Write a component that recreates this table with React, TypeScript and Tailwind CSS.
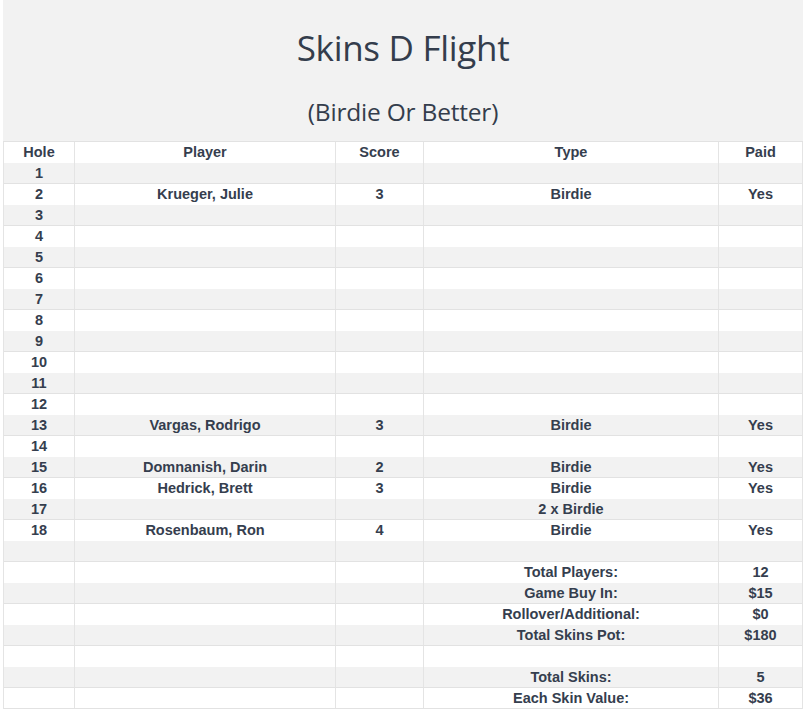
type Row = { hole?: string; player?: string; score?: string; type?: string; paid?: string };

const holes: Row[] = [
  { hole: '1' },
  { hole: '2', player: 'Krueger, Julie', score: '3', type: 'Birdie', paid: 'Yes' },
  { hole: '3' },
  { hole: '4' },
  { hole: '5' },
  { hole: '6' },
  { hole: '7' },
  { hole: '8' },
  { hole: '9' },
  { hole: '10' },
  { hole: '11' },
  { hole: '12' },
  { hole: '13', player: 'Vargas, Rodrigo', score: '3', type: 'Birdie', paid: 'Yes' },
  { hole: '14' },
  { hole: '15', player: 'Domnanish, Darin', score: '2', type: 'Birdie', paid: 'Yes' },
  { hole: '16', player: 'Hedrick, Brett', score: '3', type: 'Birdie', paid: 'Yes' },
  { hole: '17', type: '2 x Birdie' },
  { hole: '18', player: 'Rosenbaum, Ron', score: '4', type: 'Birdie', paid: 'Yes' },
  {},
  { type: 'Total Players:', paid: '12' },
  { type: 'Game Buy In:', paid: '$15' },
  { type: 'Rollover/Additional:', paid: '$0' },
  { type: 'Total Skins Pot:', paid: '$180' },
  {},
  { type: 'Total Skins:', paid: '5' },
  { type: 'Each Skin Value:', paid: '$36' },
];

function Cells({ r }: { r: Row }) {
  return (
    <>
      <div className="w-[71px] border-r border-[#e4e4e4] text-center">{r.hole}</div>
      <div className="w-[261px] border-r border-[#e4e4e4] text-center">{r.player}</div>
      <div className="w-[88px] border-r border-[#e4e4e4] text-center">{r.score}</div>
      <div className="w-[295px] border-r border-[#e4e4e4] text-center">{r.type}</div>
      <div className="flex-1 text-center">{r.paid}</div>
    </>
  );
}

export default function App() {
  return (
    <div className="bg-white px-[3px] text-[#353e4e]">
      <div
        className="h-[142px] bg-[#f2f2f2] flex flex-col items-center border-b border-[#e2e2e2] text-[#343d4c]"
        style={{ fontFamily: '"Open Sans", Lato, sans-serif' }}
      >
        <h1 className="mt-[26px] text-[35px] font-normal leading-[44px] tracking-[-0.3px]">Skins D Flight</h1>
        <p className="mt-[26px] text-[24.5px] font-normal leading-[32px] tracking-[-0.2px]">(Birdie Or Better)</p>
      </div>
      <div
        className="border-l border-r border-[#e4e4e4] text-[14.5px] font-bold"
        style={{ fontFamily: '"Liberation Sans", Arial, sans-serif' }}
      >
        <div className="flex h-[21px] leading-[21px] bg-white">
          <Cells r={{ hole: 'Hole', player: 'Player', score: 'Score', type: 'Type', paid: 'Paid' }} />
        </div>
        {holes.map((r, i) => (
          <div
            key={i}
            className={
              i % 2 === 0
                ? 'flex h-[21px] leading-[21px] bg-[#f2f2f2] border-b border-[#e2e2e2]'
                : i === holes.length - 1
                  ? 'flex h-[21px] leading-[21px] bg-white border-b border-[#e2e2e2]'
                  : 'flex h-[21px] leading-[21px] bg-white'
            }
          >
            <Cells r={r} />
          </div>
        ))}
      </div>
    </div>
  );
}
